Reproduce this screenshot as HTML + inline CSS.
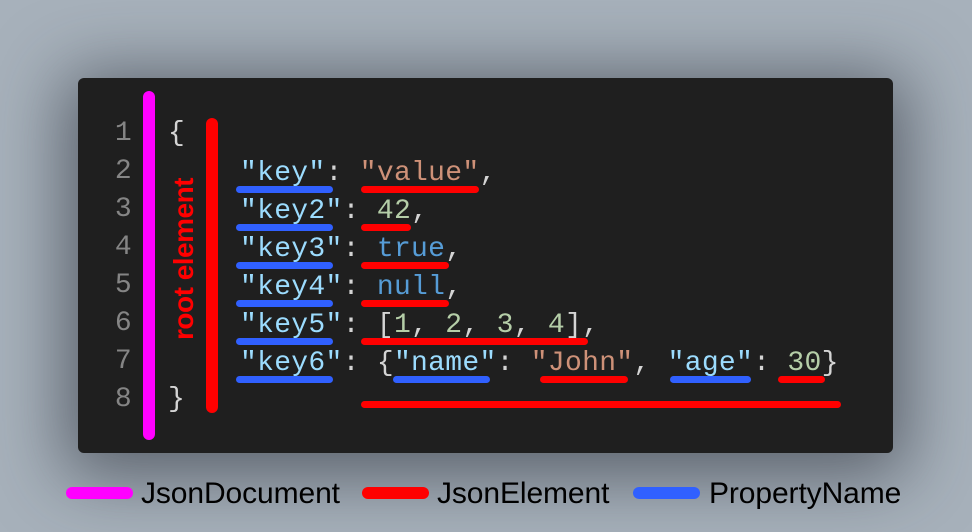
<!DOCTYPE html>
<html><head><meta charset="utf-8"><style>
html,body{margin:0;padding:0}
body{width:972px;height:532px;background:#a7b1bb;position:relative;overflow:hidden;font-family:"Liberation Sans",sans-serif}
.panel{position:absolute;left:78px;top:78px;width:815px;height:375px;background:#1f1f1f;border-radius:6px;box-shadow:0 10px 70px 14px rgba(40,45,55,.6)}
.ln{position:absolute;font-family:"Liberation Mono",monospace;font-size:28px;letter-spacing:0.3px;line-height:38px;height:38px;white-space:pre;color:#d4d4d4}
.num{color:#858585;width:40px;text-align:right;left:92px}
.k{color:#9cdcfe}.s{color:#ce9178}.n{color:#b5cea8}.b{color:#569cd6}
.bar{position:absolute;height:7px;border-radius:4px}
.bl{background:#3060ff}.rd{background:#ff0000}
.v{position:absolute;width:12px;border-radius:6px}
.rot{position:absolute;left:184px;top:259px;transform:translate(-50%,-50%) rotate(-90deg);color:#ff0000;font-weight:bold;font-size:28px;letter-spacing:-0.5px;white-space:nowrap}
.leg{position:absolute;top:478px;font-size:30px;color:#000;line-height:32px;letter-spacing:-0.1px}
.pill{position:absolute;top:487px;height:12px;border-radius:6px;width:67px}
</style></head><body>
<div class="panel"></div>
<div class="v" style="left:143px;top:91px;height:349px;background:#ff00ff"></div>
<div class="v" style="left:206px;top:118px;height:295px;background:#ff0000"></div>
<div class="rot">root element</div>

<div class="ln num" style="top:115px">1</div>
<div class="ln num" style="top:153px">2</div>
<div class="ln num" style="top:191px">3</div>
<div class="ln num" style="top:229px">4</div>
<div class="ln num" style="top:267px">5</div>
<div class="ln num" style="top:305px">6</div>
<div class="ln num" style="top:343px">7</div>
<div class="ln num" style="top:381px">8</div>

<div class="ln" style="left:168px;top:115px">{</div>
<div class="ln" style="left:240px;top:155px"><span class="k">"key"</span>: <span class="s">"value"</span>,</div>
<div class="ln" style="left:240px;top:193px"><span class="k">"key2"</span>: <span class="n">42</span>,</div>
<div class="ln" style="left:240px;top:231px"><span class="k">"key3"</span>: <span class="b">true</span>,</div>
<div class="ln" style="left:240px;top:269px"><span class="k">"key4"</span>: <span class="b">null</span>,</div>
<div class="ln" style="left:240px;top:307px"><span class="k">"key5"</span>: [<span class="n">1</span>, <span class="n">2</span>, <span class="n">3</span>, <span class="n">4</span>],</div>
<div class="ln" style="left:240px;top:345px"><span class="k">"key6"</span>: {<span class="k">"name"</span>: <span class="s">"John"</span>, <span class="k">"age"</span>: <span class="n">30</span>}</div>
<div class="ln" style="left:168px;top:381px">}</div>

<div class="bar bl" style="left:236px;width:97px;top:186px"></div>
<div class="bar rd" style="left:361px;width:118px;top:186px"></div>
<div class="bar bl" style="left:236px;width:97px;top:224px"></div>
<div class="bar rd" style="left:361px;width:50px;top:224px"></div>
<div class="bar bl" style="left:236px;width:97px;top:262px"></div>
<div class="bar rd" style="left:361px;width:88px;top:262px"></div>
<div class="bar bl" style="left:236px;width:97px;top:300px"></div>
<div class="bar rd" style="left:361px;width:88px;top:300px"></div>
<div class="bar bl" style="left:236px;width:97px;top:338px"></div>
<div class="bar rd" style="left:361px;width:227px;top:338px"></div>
<div class="bar bl" style="left:236px;width:97px;top:376px"></div>
<div class="bar bl" style="left:393px;width:97px;top:376px"></div>
<div class="bar rd" style="left:540px;width:88px;top:376px"></div>
<div class="bar bl" style="left:670px;width:81px;top:376px"></div>
<div class="bar rd" style="left:778px;width:47px;top:376px"></div>
<div class="bar rd" style="left:361px;width:480px;top:401px"></div>

<div class="pill" style="left:66px;background:#ff00ff"></div>
<div class="leg" style="left:141px">JsonDocument</div>
<div class="pill" style="left:362px;background:#ff0000"></div>
<div class="leg" style="left:437px">JsonElement</div>
<div class="pill" style="left:633px;background:#3060ff"></div>
<div class="leg" style="left:709px">PropertyName</div>
</body></html>
